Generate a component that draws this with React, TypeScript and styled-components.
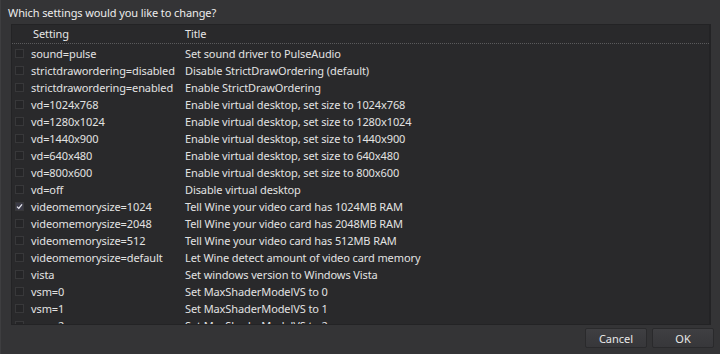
import React from "react";
import styled, { createGlobalStyle } from "styled-components";

const Global = createGlobalStyle`
  html, body { margin: 0; padding: 0; background: #343436; }
  body { font-family: "Noto Sans", "Open Sans", sans-serif; }
`;

const Dialog = styled.div`
  width: 720px;
  height: 354px;
  box-sizing: border-box;
  background: #343436;
  border-left: 1px solid #3e3e40;
  padding: 4px 9px 6px 10px;
  display: flex;
  flex-direction: column;
  color: #e4e4e4;
  font-size: 11px;
  letter-spacing: -0.1px;
`;

const Prompt = styled.div`
  height: 20px;
  line-height: 18px;
  margin-left: -3px;
  color: #ececec;
`;

const TableBox = styled.div`
  height: 300px;
  background: #29292b;
  border: 1px solid #232325;
  border-right: 2px solid #232325;
  overflow: hidden;
  display: flex;
  flex-direction: column;
`;

const HeaderRow = styled.div`
  display: grid;
  grid-template-columns: 173px 1fr;
  height: 18px;
  align-items: center;
  border-bottom: 1px dotted #5a5a5c;
  margin-bottom: 1px;
  flex-shrink: 0;
`;

const HeadCell = styled.div<{ $pad: number }>`
  padding-left: ${(p) => p.$pad}px;
  color: #e6e6e6;
`;

const Row = styled.div`
  display: grid;
  grid-template-columns: 19px 154px 1fr;
  height: 17px;
  align-items: center;
  flex-shrink: 0;
  white-space: nowrap;
`;

const Check = styled.span<{ $on?: boolean }>`
  width: 9px;
  height: 9px;
  margin-left: 3px;
  box-sizing: border-box;
  background: ${(p) => (p.$on ? "#3a3a46" : "#252527")};
  border: 1px solid #38383a;
  display: flex;
  align-items: center;
  justify-content: center;
`;

const Cell = styled.span`
  color: #e2e2e2;
`;

const Footer = styled.div`
  display: flex;
  justify-content: flex-end;
  gap: 5px;
  margin-top: 3px;
  margin-right: -3px;
`;

const Button = styled.button`
  width: 62px;
  height: 20px;
  font-family: inherit;
  font-size: 11px;
  color: #e8e8e8;
  background: linear-gradient(#3f3f42, #37373a);
  border: 1px solid #2a2a2c;
  border-radius: 2px;
  padding: 0;
`;

const rows: [string, string, boolean?][] = [
  ["sound=pulse", "Set sound driver to PulseAudio"],
  ["strictdrawordering=disabled", "Disable StrictDrawOrdering (default)"],
  ["strictdrawordering=enabled", "Enable StrictDrawOrdering"],
  ["vd=1024x768", "Enable virtual desktop, set size to 1024x768"],
  ["vd=1280x1024", "Enable virtual desktop, set size to 1280x1024"],
  ["vd=1440x900", "Enable virtual desktop, set size to 1440x900"],
  ["vd=640x480", "Enable virtual desktop, set size to 640x480"],
  ["vd=800x600", "Enable virtual desktop, set size to 800x600"],
  ["vd=off", "Disable virtual desktop"],
  ["videomemorysize=1024", "Tell Wine your video card has 1024MB RAM", true],
  ["videomemorysize=2048", "Tell Wine your video card has 2048MB RAM"],
  ["videomemorysize=512", "Tell Wine your video card has 512MB RAM"],
  ["videomemorysize=default", "Let Wine detect amount of video card memory"],
  ["vista", "Set windows version to Windows Vista"],
  ["vsm=0", "Set MaxShaderModelVS to 0"],
  ["vsm=1", "Set MaxShaderModelVS to 1"],
  ["vsm=2", "Set MaxShaderModelVS to 2"],
];

export default function App() {
  return (
    <>
      <Global />
      <Dialog>
        <Prompt>Which settings would you like to change?</Prompt>
        <TableBox>
          <HeaderRow>
            <HeadCell $pad={21}>Setting</HeadCell>
            <HeadCell $pad={0}>Title</HeadCell>
          </HeaderRow>
          {rows.map(([k, t, on]) => (
            <Row key={k}>
              <Check $on={on}>
                {on && (
                  <svg width="7" height="7" viewBox="0 0 7 7">
                    <path d="M1 3.6 L2.8 5.4 L6 1.4" stroke="#e8e8f0" strokeWidth="1.3" fill="none" />
                  </svg>
                )}
              </Check>
              <Cell>{k}</Cell>
              <Cell>{t}</Cell>
            </Row>
          ))}
        </TableBox>
        <Footer>
          <Button>Cancel</Button>
          <Button>OK</Button>
        </Footer>
      </Dialog>
    </>
  );
}
